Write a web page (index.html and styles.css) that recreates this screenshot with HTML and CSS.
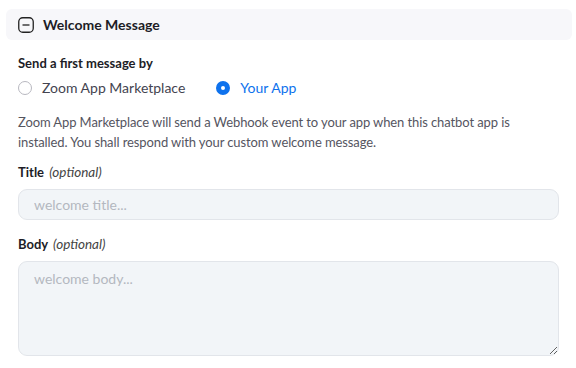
FILE: index.html
```html
<!DOCTYPE html>
<html lang="en">
<head>
    <meta charset="UTF-8">
    <meta name="viewport" content="width=device-width, initial-scale=1.0">
    <title>Welcome Message</title>
    <link rel="stylesheet" href="styles.css">
</head>
<body>
    <div class="section-header">
        <svg class="collapse-icon" width="16" height="16" viewBox="0 0 16 16">
            <rect x="0.75" y="0.75" width="14.5" height="14.5" rx="4" fill="none" stroke="#222" stroke-width="1.3"/>
            <line x1="4.5" y1="8" x2="11.5" y2="8" stroke="#222" stroke-width="1.3"/>
        </svg>
        <span class="section-title">Welcome Message</span>
    </div>

    <div class="section-body">
        <div class="field-label first-label">Send a first message by</div>
        <div class="radio-row">
            <label class="radio-option">
                <span class="radio"></span>
                Zoom App Marketplace
            </label>
            <label class="radio-option checked">
                <span class="radio"></span>
                Your App
            </label>
        </div>

        <p class="hint">Zoom App Marketplace will send a Webhook event to your app when this chatbot app is installed. You shall respond with your custom welcome message.</p>

        <div class="field-label title-label">Title <em>(optional)</em></div>
        <input type="text" class="text-input" placeholder="welcome title...">

        <div class="field-label body-label">Body <em>(optional)</em></div>
        <textarea class="text-area" placeholder="welcome body..."></textarea>
    </div>
</body>
</html>
```

FILE: styles.css
```css
body {
    margin: 0;
    padding: 0;
    background-color: white;
    font-family: Lato, "Noto Sans", sans-serif;
    color: #222230;
}

.section-header {
    display: flex;
    align-items: center;
    height: 31px;
    margin: 9px 4px 0 6px;
    padding-left: 12px;
    background-color: #f7f7fa;
    border-radius: 6px;
}

.collapse-icon {
    flex: 0 0 auto;
}

.section-title {
    margin-left: 9px;
    font-size: 14px;
    font-weight: bold;
    color: #1d1d26;
}

.section-body {
    padding: 0 17px 0 18px;
}

.field-label {
    font-size: 13px;
    font-weight: bold;
    color: #1d1d26;
    line-height: 18px;
}

.field-label em {
    font-size: 13.5px;
    font-weight: normal;
    color: #444;
    margin-left: 2px;
}

.first-label {
    margin-top: 14px;
}

.title-label {
    margin-top: 11px;
}

.body-label {
    margin-top: 15px;
}

.radio-row {
    display: flex;
    margin-top: 6px;
}

.radio-option {
    display: flex;
    align-items: center;
    font-size: 14px;
    color: #444450;
    line-height: 20px;
    margin-right: 31px;
}

.radio {
    display: inline-block;
    box-sizing: border-box;
    width: 14px;
    height: 14px;
    border: 1px solid #b8b8c0;
    border-radius: 50%;
    margin-right: 10px;
}

.radio-option.checked {
    color: #0e72ed;
}

.radio-option.checked .radio {
    border: 5px solid #0e72ed;
    background-color: white;
}

.hint {
    font-size: 13px;
    letter-spacing: -0.1px;
    line-height: 20px;
    color: #55555f;
    margin: 14px 0 0 0;
}

.text-input,
.text-area {
    display: block;
    box-sizing: border-box;
    width: 100%;
    margin-top: 8px;
    padding: 0 15px;
    font-family: Lato, "Noto Sans", sans-serif;
    font-size: 14px;
    color: #222;
    background-color: #f2f5f8;
    border: 1px solid #e2e5ea;
    border-radius: 9px;
    outline: none;
}

.text-input {
    height: 31px;
}

.text-area {
    height: 95px;
    padding-top: 8px;
    resize: vertical;
}

.text-input::placeholder,
.text-area::placeholder {
    color: #b4b8c0;
}
```
